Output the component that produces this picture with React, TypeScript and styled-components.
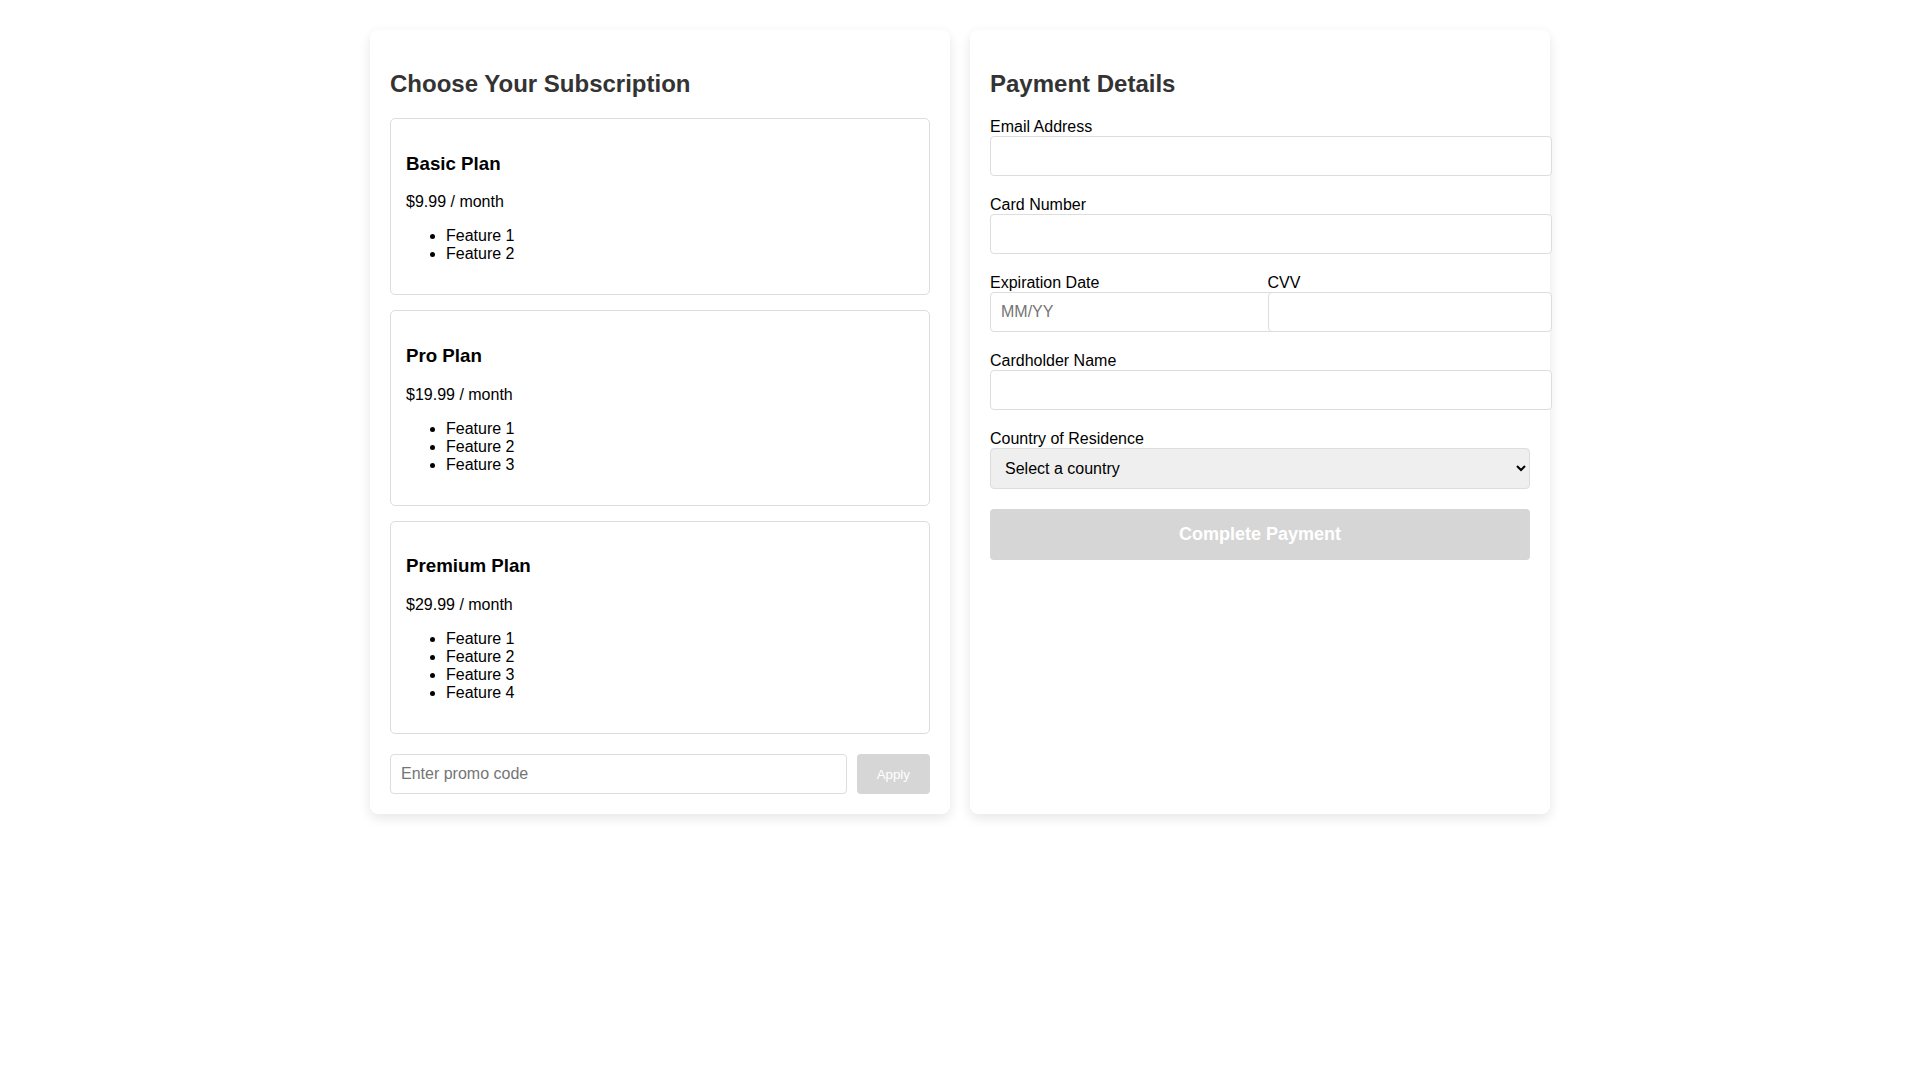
import React from 'react';
import styled, { createGlobalStyle } from 'styled-components';

const GlobalStyle = createGlobalStyle`
  body {
    margin: 0;
    background: #fff;
    font-family: "Liberation Sans", Arial, sans-serif;
    color: #000;
  }
`;

const Page = styled.div`
  display: flex;
  align-items: stretch;
  gap: 20px;
  width: 1180px;
  margin: 0 auto;
  padding: 30px 0;
`;

const Panel = styled.section`
  flex: 1;
  min-width: 0;
  background: #fff;
  border-radius: 8px;
  padding: 20px;
  box-shadow: 0 4px 12px rgba(0, 0, 0, 0.1);
`;

const PanelTitle = styled.h2`
  font-size: 1.5em;
  margin: 0.83em 0;
  color: #333;
`;

const PlanCard = styled.div`
  border: 1px solid #ddd;
  border-radius: 5px;
  padding: 15px;
  margin-bottom: 15px;
`;

const PlanName = styled.h3`
  font-size: 1.17em;
  margin: 1em 0;
`;

const Price = styled.p`
  margin: 1em 0;
`;

const FeatureList = styled.ul`
  margin: 1em 0;
  padding-left: 40px;
`;

const PromoRow = styled.div`
  display: flex;
  gap: 10px;
  margin-top: 20px;
`;

const TextInput = styled.input`
  width: 100%;
  padding: 10px;
  border: 1px solid #ddd;
  border-radius: 4px;
  font-family: "Liberation Sans", Arial, sans-serif;
  font-size: 16px;
  background: #fff;
`;

const PromoInput = styled(TextInput)`
  flex: 1;
  width: auto;
`;

const ApplyButton = styled.button`
  padding: 0 20px;
  border: none;
  border-radius: 4px;
  background: #d6d6d6;
  color: #fff;
  font-family: "Liberation Sans", Arial, sans-serif;
  font-size: 13.333px;
`;

const Field = styled.div`
  margin-bottom: 20px;
`;

const FieldRow = styled.div`
  display: flex;
  gap: 15px;
`;

const FieldCol = styled(Field)`
  flex: 1;
  min-width: 0;
`;

const Label = styled.label`
  display: block;
`;

const Select = styled.select`
  width: 100%;
  padding: 10px;
  border: 1px solid #ddd;
  border-radius: 4px;
  background-color: #efefef;
  color: #000;
  font-family: "Liberation Sans", Arial, sans-serif;
  font-size: 16px;
`;

const PayButton = styled.button`
  width: 100%;
  padding: 15px;
  border: none;
  border-radius: 4px;
  background: #d6d6d6;
  color: #fff;
  font-family: "Liberation Sans", Arial, sans-serif;
  font-size: 18px;
  font-weight: bold;
`;

const plans = [
  { name: 'Basic Plan', price: '$9.99 / month', features: 2 },
  { name: 'Pro Plan', price: '$19.99 / month', features: 3 },
  { name: 'Premium Plan', price: '$29.99 / month', features: 4 },
];

const App: React.FC = () => {
  return (
    <>
      <GlobalStyle />
      <Page>
        <Panel>
          <PanelTitle>Choose Your Subscription</PanelTitle>
          {plans.map((plan) => (
            <PlanCard key={plan.name}>
              <PlanName>{plan.name}</PlanName>
              <Price>{plan.price}</Price>
              <FeatureList>
                {Array.from({ length: plan.features }, (_, i) => (
                  <li key={i}>Feature {i + 1}</li>
                ))}
              </FeatureList>
            </PlanCard>
          ))}
          <PromoRow>
            <PromoInput type="text" placeholder="Enter promo code" />
            <ApplyButton disabled>Apply</ApplyButton>
          </PromoRow>
        </Panel>

        <Panel>
          <PanelTitle>Payment Details</PanelTitle>
          <Field>
            <Label htmlFor="email">Email Address</Label>
            <TextInput id="email" type="email" />
          </Field>
          <Field>
            <Label htmlFor="card">Card Number</Label>
            <TextInput id="card" type="text" />
          </Field>
          <FieldRow>
            <FieldCol>
              <Label htmlFor="expiry">Expiration Date</Label>
              <TextInput id="expiry" type="text" placeholder="MM/YY" />
            </FieldCol>
            <FieldCol>
              <Label htmlFor="cvv">CVV</Label>
              <TextInput id="cvv" type="text" />
            </FieldCol>
          </FieldRow>
          <Field>
            <Label htmlFor="holder">Cardholder Name</Label>
            <TextInput id="holder" type="text" />
          </Field>
          <Field>
            <Label htmlFor="country">Country of Residence</Label>
            <Select id="country" defaultValue="">
              <option value="">Select a country</option>
              <option value="us">United States</option>
              <option value="ca">Canada</option>
              <option value="uk">United Kingdom</option>
            </Select>
          </Field>
          <PayButton disabled>Complete Payment</PayButton>
        </Panel>
      </Page>
    </>
  );
};

export default App;
